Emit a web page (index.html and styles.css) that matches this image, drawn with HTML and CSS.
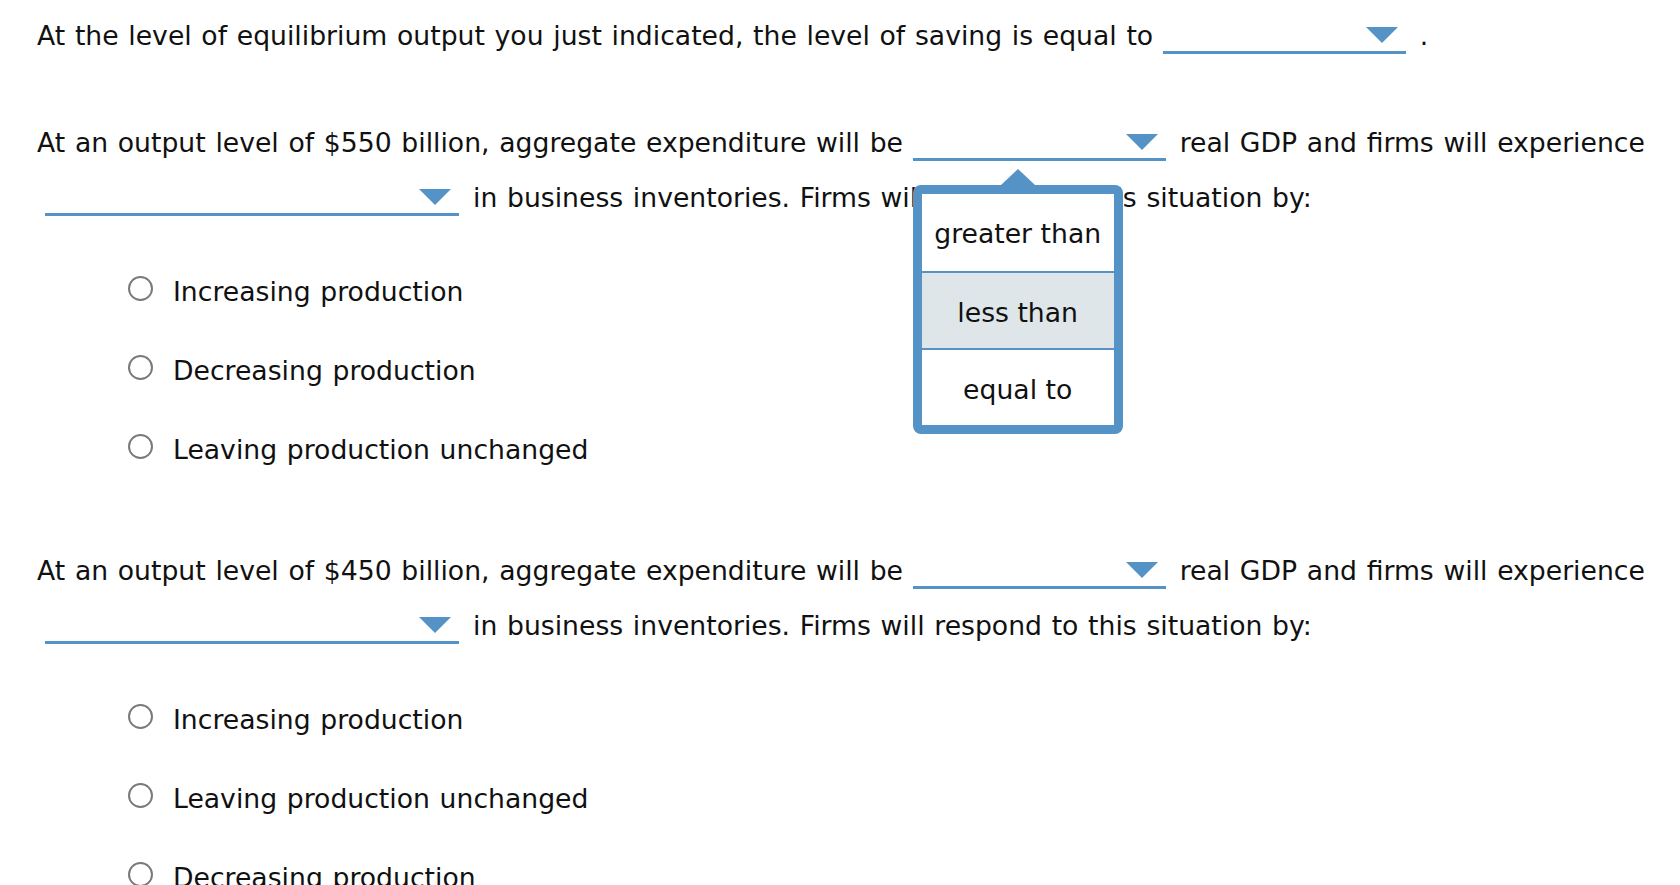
FILE: index.html
```html
<!DOCTYPE html>
<html lang="en">
<head>
  <meta charset="UTF-8">
  <meta name="viewport" content="width=device-width, initial-scale=1.0">
  <title>Aggregate Expenditure</title>
  <link rel="stylesheet" href="styles.css">
</head>
<body>
  <div class="page">
    <p class="line first">At the level of equilibrium output you just indicated, the level of saving is equal to <span class="pick pick-sm"></span>.</p>

    <div class="question">
      <p class="line">At an output level of $550 billion, aggregate expenditure will be <span class="pick pick-md">
          <span class="menu">
            <span class="menu-item">greater than</span>
            <span class="menu-item active">less than</span>
            <span class="menu-item">equal to</span>
          </span>
        </span>real GDP and firms will experience <span class="pick pick-lg wrapped"></span>in business inventories. Firms will respond to this situation by:</p>
      <ul class="choices">
        <li><span class="radio"></span>Increasing production</li>
        <li><span class="radio"></span>Decreasing production</li>
        <li><span class="radio"></span>Leaving production unchanged</li>
      </ul>
    </div>

    <div class="question">
      <p class="line">At an output level of $450 billion, aggregate expenditure will be <span class="pick pick-md"></span>real GDP and firms will experience <span class="pick pick-lg wrapped"></span>in business inventories. Firms will respond to this situation by:</p>
      <ul class="choices">
        <li><span class="radio"></span>Increasing production</li>
        <li><span class="radio"></span>Leaving production unchanged</li>
        <li><span class="radio"></span>Decreasing production</li>
      </ul>
    </div>
  </div>
</body>
</html>
```

FILE: styles.css
```css
body {
  margin: 0;
  background: #fff;
  color: #111;
  font-family: "DejaVu Sans", Verdana, sans-serif;
  font-size: 26.67px;
  word-spacing: 1.2px;
}
.page {
  padding: 9px 20px 0 37px;
}
.line {
  margin: 0;
  line-height: 54.5px;
}
.first {
  margin-bottom: 52.5px;
}
.question {
  margin-bottom: 67.5px;
}

/* dropdown blanks */
.pick {
  position: relative;
  display: inline-block;
  height: 30px;
  margin-right: 14px;
  border-bottom: 3px solid #5592c6;
  vertical-align: -9px;
}
.pick::after {
  content: "";
  position: absolute;
  right: 8px;
  bottom: 8px;
  border-left: 16px solid transparent;
  border-right: 16px solid transparent;
  border-top: 16px solid #5592c6;
}
.pick-sm {
  width: 243px;
}
.pick-md {
  width: 253px;
}
.pick-lg {
  width: 414px;
}
.wrapped {
  margin-left: 8px;
}

/* open menu */
.menu {
  position: absolute;
  left: 0;
  top: calc(100% + 27px);
  z-index: 2;
  display: flex;
  flex-direction: column;
  box-sizing: border-box;
  width: 210px;
  border: 9px solid #5592c6;
  border-radius: 8px;
  background: #fff;
  word-spacing: 0;
}
.menu::before {
  content: "";
  position: absolute;
  top: -25px;
  left: 50%;
  margin-left: -17px;
  border-left: 17px solid transparent;
  border-right: 17px solid transparent;
  border-bottom: 16px solid #5592c6;
}
.menu-item {
  box-sizing: border-box;
  height: 77px;
  padding-top: 3px;
  line-height: 74px;
  text-align: center;
  white-space: nowrap;
}
.menu-item + .menu-item {
  border-top: 2px solid #5592c6;
}
.menu-item.active {
  background: #dee6e9;
}

/* radio options */
.choices {
  list-style: none;
  margin: 39px 0 0;
  padding: 0 0 0 91px;
}
.choices li {
  display: flex;
  align-items: center;
  height: 54px;
  margin-bottom: 25.3px;
}
.choices li:last-child {
  margin-bottom: 0;
}
.radio {
  flex: none;
  box-sizing: border-box;
  width: 25px;
  height: 25px;
  margin: -6px 20px 0 0;
  border: 2px solid #7a7a7a;
  border-radius: 50%;
}
```
